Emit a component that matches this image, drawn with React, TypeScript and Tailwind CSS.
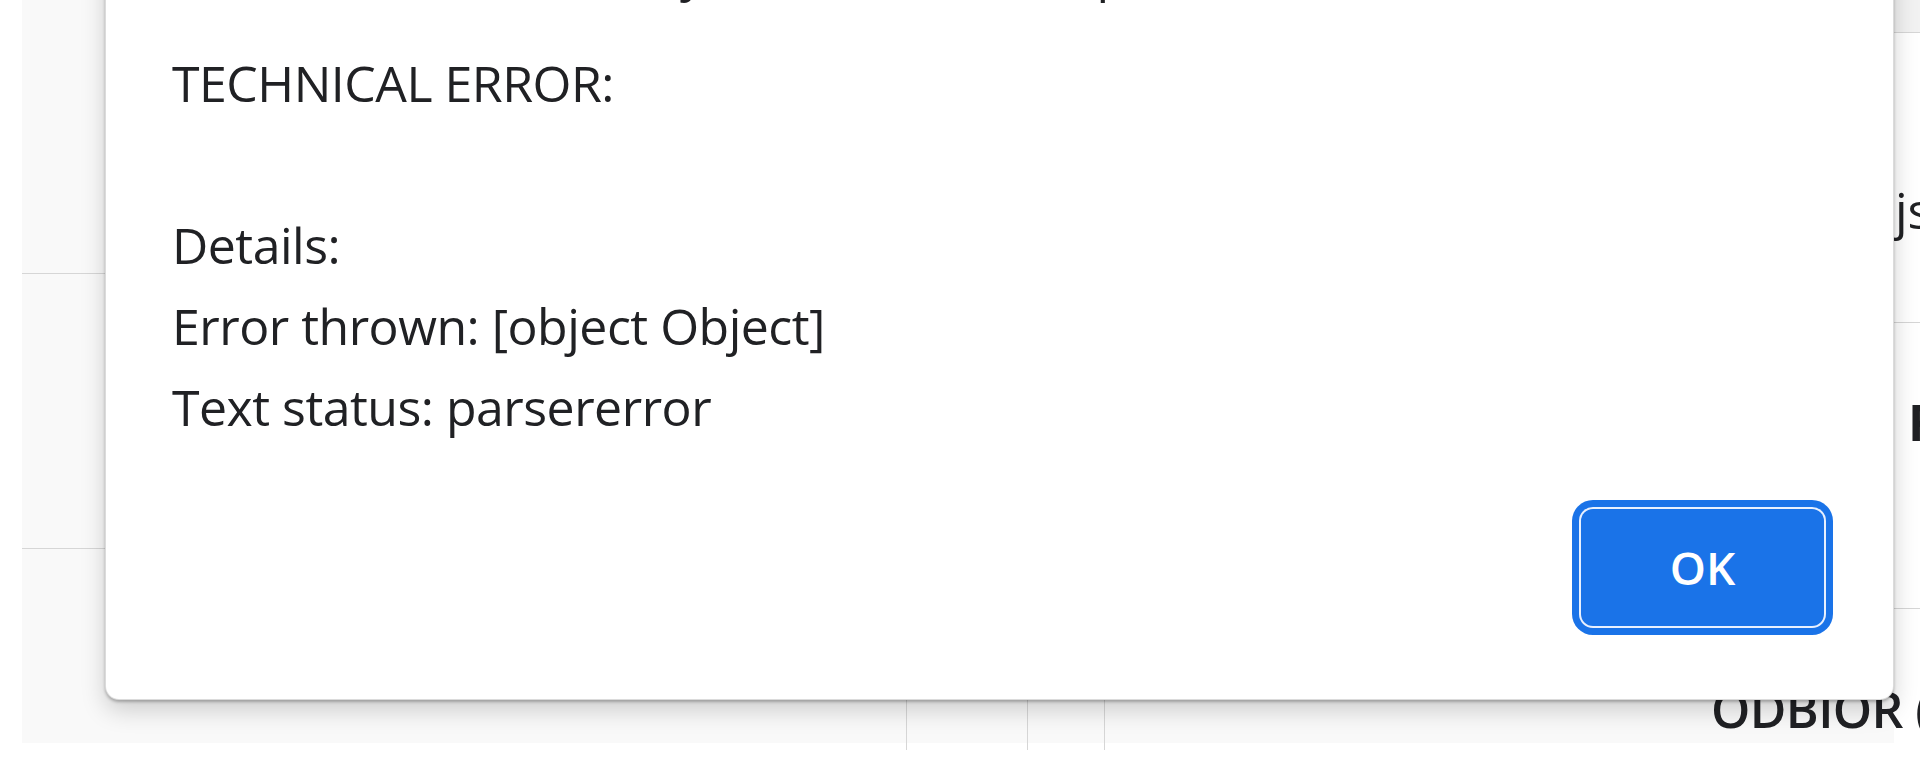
import React from "react";

export default function App() {
  return (
    <div className="relative w-[1920px] h-[766px] overflow-hidden bg-white font-['Open_Sans',sans-serif] text-[#202124]">
      {/* background page */}
      <div className="flex pl-[22px]">
        <div className="w-[1872px] shrink-0 h-[743px] bg-[#f9f9f9] flex flex-col">
          <div className="h-[274px] shrink-0 border-b border-[#d6d6d6]" />
          <div className="h-[275px] shrink-0 border-b border-[#d6d6d6]" />
          <div className="flex-1 flex">
            <div className="w-[885px] shrink-0 border-r border-[#d6d6d6]" />
            <div className="w-[121px] shrink-0 border-r border-[#d6d6d6]" />
            <div className="w-[77px] shrink-0 border-r border-[#d6d6d6]" />
            <div className="flex-1 min-w-0 pl-[606px] pt-[120px]">
              <div className="whitespace-nowrap text-[50px] leading-[81px] font-semibold tracking-[-0.6px]">
                ODBIOR (
              </div>
            </div>
          </div>
        </div>
        <div className="w-[26px] shrink-0 flex flex-col">
          <div className="h-[33px] bg-[#f2f2f2] border-b border-[#d6d6d6]" />
          <div className="h-[290px] border-b border-[#d6d6d6] pl-[1px] pt-[137px]">
            <div className="whitespace-nowrap text-[50px] leading-[81px]">js</div>
          </div>
          <div className="h-[286px] border-b border-[#d6d6d6] pl-[14px] pt-[59px]">
            <div className="whitespace-nowrap text-[50px] leading-[81px] font-bold">F</div>
          </div>
        </div>
      </div>

      {/* alert dialog */}
      <div className="absolute left-[105px] top-[-100px] w-[1789px] bg-white rounded-[14px] border border-[rgba(0,0,0,0.14)] shadow-[0_2px_3px_rgba(0,0,0,0.25),0_10px_24px_rgba(0,0,0,0.18)] pt-[31px] pl-[66px] pr-[69px] pb-[73px]">
        <div className="flex text-[50px] leading-[81px] tracking-[-0.6px] whitespace-nowrap">
          <span className="ml-[508px]">y</span>
          <span className="ml-[392px]">p</span>
        </div>
        <div className="mt-[30px] text-[50px] leading-[81px] tracking-[-0.5px]">
          <div>TECHNICAL ERROR:</div>
          <div className="h-[81px]" />
          <div>Details:</div>
          <div>Error thrown: [object Object]</div>
          <div>Text status: parsererror</div>
        </div>
        <div className="mt-[61px] flex justify-end">
          <button className="w-[243px] h-[117px] rounded-[12px] bg-[#1a73e8] text-white text-[46px] font-semibold shadow-[0_0_0_2px_#e8f0fe,0_0_0_9px_#1a73e8]">
            OK
          </button>
        </div>
      </div>
    </div>
  );
}
